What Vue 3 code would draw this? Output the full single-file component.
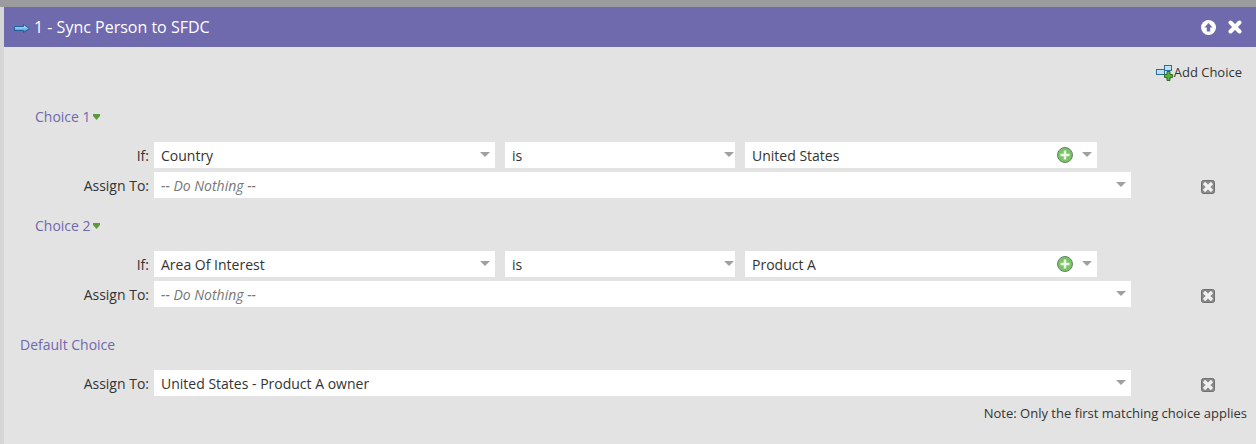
<script setup>
const choices = [
  { name: 'Choice 1', field: 'Country', op: 'is', value: 'United States' },
  { name: 'Choice 2', field: 'Area Of Interest', op: 'is', value: 'Product A' },
]
</script>

<template>
  <div class="page">
    <div class="top-band"></div>
    <div class="panel">
      <div class="header">
        <svg class="flow-icon" width="16" height="9" viewBox="0 0 16 9">
          <defs>
            <linearGradient id="arrowFill" x1="0" y1="0" x2="0" y2="1">
              <stop offset="0" stop-color="#d8f0ff" />
              <stop offset="1" stop-color="#2f86cc" />
            </linearGradient>
          </defs>
          <path d="M0.500 2.500h9V0.500l6 4-6 4v-2h-9z" fill="url(#arrowFill)" stroke="#1f5f9c" stroke-width="1" />
        </svg>
        <span class="title">1 - Sync Person to SFDC</span>
        <div class="header-actions">
          <svg width="15" height="15" viewBox="0 0 15 15">
            <circle cx="7.500" cy="7.500" r="7.500" fill="#fff" />
            <path d="M7.500 3l4 4.500H9.200V11.500H5.800V7.500H3.500z" fill="#6f69ae" />
          </svg>
          <svg width="14" height="14" viewBox="0 0 14 14">
            <path d="M2.500 2.500l9 9M11.500 2.500l-9 9" stroke="#fff" stroke-width="4" stroke-linecap="round" />
          </svg>
        </div>
      </div>

      <div class="body">
        <div class="add-row">
          <svg class="add-icon" width="17" height="16" viewBox="0 0 17 16">
            <rect x="8.500" y="0.500" width="7" height="5" fill="#bfe0f5" stroke="#2a6d9e" />
            <rect x="0.500" y="4.500" width="8" height="5" fill="#bfe0f5" stroke="#2a6d9e" />
            <path d="M11 6.500h3v3h2.500v3H14v3h-3v-3H8.500v-3H11z" fill="#55b341" stroke="#2d6d24" />
          </svg>
          <span>Add Choice</span>
        </div>

        <section v-for="choice in choices" :key="choice.name" class="choice">
          <div class="choice-title">
            {{ choice.name }}
            <svg width="7" height="6" viewBox="0 0 7 6"><path d="M0 0h7v2L3.500 6 0 2z" fill="#5b9a3c" /></svg>
          </div>
          <div class="row if-row">
            <label>If:</label>
            <div class="select field"><span>{{ choice.field }}</span><i class="caret"></i></div>
            <div class="select op"><span>{{ choice.op }}</span><i class="caret"></i></div>
            <div class="select value">
              <span>{{ choice.value }}</span>
              <svg class="plus" width="16" height="16" viewBox="0 0 16 16">
                <circle cx="8" cy="8" r="7.500" fill="#76c466" stroke="#6a8266" />
                <path d="M8 3.500v9M3.500 8h9" stroke="#eef9e9" stroke-width="2.500" />
              </svg>
              <i class="caret"></i>
            </div>
          </div>
          <div class="row">
            <label>Assign To:</label>
            <div class="select assign"><em>-- Do Nothing --</em><i class="caret"></i></div>
            <svg class="remove" width="14" height="14" viewBox="0 0 14 14">
              <rect x="0.500" y="0.500" width="13" height="13" rx="2" fill="#8a8a8a" stroke="#6f6f6f" />
              <path d="M3 3l8 8M11 3l-8 8" stroke="#f1f1f1" stroke-width="3.200" />
            </svg>
          </div>
        </section>

        <section class="default-choice">
          <div class="default-title">Default Choice</div>
          <div class="row">
            <label>Assign To:</label>
            <div class="select assign"><span>United States - Product A owner</span><i class="caret"></i></div>
            <svg class="remove" width="14" height="14" viewBox="0 0 14 14">
              <rect x="0.500" y="0.500" width="13" height="13" rx="2" fill="#8a8a8a" stroke="#6f6f6f" />
              <path d="M3 3l8 8M11 3l-8 8" stroke="#f1f1f1" stroke-width="3.200" />
            </svg>
          </div>
          <div class="note">Note: Only the first matching choice applies</div>
        </section>
      </div>
    </div>
  </div>
</template>

<style>
html, body {
  margin: 0;
  background: #e3e3e3;
}
</style>

<style scoped>
.page {
  width: 1256px;
  height: 444px;
  overflow: hidden;
  background: #d6d6d6;
  font-family: "Open Sans", "Noto Sans", sans-serif;
  font-size: 14px;
  color: #333;
}

.top-band {
  height: 7px;
  background: #9c9b9e;
}

.panel {
  margin-left: 4px;
  height: 437px;
  background: #e3e3e3;
}

.header {
  height: 40px;
  background: #6f69ae;
  display: flex;
  align-items: center;
  padding-left: 10px;
  color: #fff;
}

.flow-icon {
  margin-right: 4px;
  margin-top: 2px;
}

.title {
  font-size: 16px;
}

.header-actions {
  margin-left: auto;
  display: flex;
  align-items: center;
  gap: 12px;
  padding-right: 14px;
}

.body {
  padding-top: 15px;
}

.add-row {
  height: 20px;
  display: flex;
  justify-content: flex-end;
  align-items: center;
  padding-right: 14px;
  font-size: 13px;
}

.add-icon {
  margin-top: 2px;
  margin-right: 1px;
}

.choice {
  padding-bottom: 14px;
}

.choice:first-of-type {
  padding-top: 25px;
}

.choice-title {
  height: 20px;
  line-height: 20px;
  margin-bottom: 15px;
  margin-left: 31px;
  color: #6f69ae;
  display: flex;
  align-items: center;
  gap: 2px;
}

.row {
  display: flex;
  align-items: center;
  height: 26px;
  margin-bottom: 4px;
}

.row label {
  width: 145px;
  text-align: right;
  margin-right: 5px;
}

.select {
  height: 26px;
  background: #fff;
  display: flex;
  align-items: center;
  padding: 0 7px;
  box-sizing: border-box;
  color: #333;
}

.select em {
  color: #777;
}

.caret {
  margin-left: auto;
  width: 0;
  height: 0;
  border-left: 5px solid transparent;
  border-right: 5px solid transparent;
  border-top: 5px solid #a0a0a0;
  margin-top: -2px;
  margin-right: -2px;
}

.field {
  width: 341px;
  margin-right: 10px;
}

.op {
  width: 230px;
  margin-right: 10px;
}

.op .caret {
  margin-right: -2px;
  transform: translateX(4px);
}

.value {
  width: 352px;
}

.plus {
  margin-left: auto;
  margin-right: 9px;
}

.value .caret {
  margin-left: 0;
}

.assign {
  width: 977px;
}

.remove {
  margin-left: 70px;
  margin-top: 4px;
}

.default-choice {
  padding-top: 10px;
}

.default-title {
  height: 20px;
  line-height: 20px;
  margin-left: 16px;
  margin-bottom: 15px;
  color: #6f69ae;
}

.note {
  text-align: right;
  padding-right: 9px;
  font-size: 13px;
  margin-top: 8px;
}
</style>
